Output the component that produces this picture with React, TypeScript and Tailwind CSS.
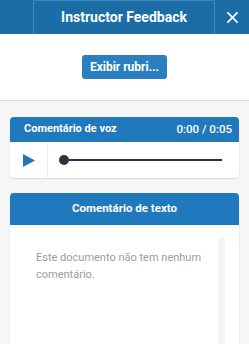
import React from 'react';

const App: React.FC = () => {
  return (
    <div className="w-[249px] h-[344px] overflow-hidden bg-[#f6f6f6] font-['Roboto',sans-serif]">
      {/* Top bar */}
      <div className="flex h-[34px] bg-[#1c6ca5]">
        <div className="w-[33px]" />
        <div className="flex w-[182px] items-center justify-center border-x border-t border-[#3c88bd] text-[14px] font-bold text-white">
          Instructor Feedback
        </div>
        <div className="flex flex-1 items-center justify-center">
          <svg width="13" height="13" viewBox="0 0 14 14" fill="none" stroke="white" strokeWidth="1.8">
            <path d="M1.5 1.5l11 11M12.5 1.5l-11 11" />
          </svg>
        </div>
      </div>

      {/* Rubric button */}
      <div className="flex h-[67px] items-center justify-center border-b border-[#dddddd] bg-white">
        <button className="h-[24px] w-[85px] rounded-[3px] bg-[#2a7fc1] text-[12px] font-bold text-white">
          Exibir rubri...
        </button>
      </div>

      <div className="flex flex-col gap-[15px] px-[10px] pt-[16px]">
        {/* Voice comment */}
        <div className="overflow-hidden rounded-[4px] bg-white shadow-[0_1px_2px_rgba(0,0,0,0.12)]">
          <div className="flex h-[25px] items-center justify-between bg-[#2079bc] pl-[14px] pr-[7px] text-[11px] font-bold text-white">
            <span>Comentário de voz</span>
            <span className="text-[11.5px] font-medium">0:00 / 0:05</span>
          </div>
          <div className="flex h-[36px]">
            <div className="flex w-[38px] items-center justify-center border-r border-[#eeeeee]">
              <svg width="12" height="13" viewBox="0 0 12 13">
                <path d="M0 0L12 6.5L0 13z" fill="#1f78bd" />
              </svg>
            </div>
            <div className="flex flex-1 items-center pl-[11px] pr-[17px]">
              <div className="h-[10px] w-[10px] shrink-0 rounded-full bg-[#2b3140]" />
              <div className="h-[2px] flex-1 bg-[#2b3140]" />
            </div>
          </div>
        </div>

        {/* Text comment */}
        <div className="h-[160px] overflow-hidden rounded-t-[4px] bg-white shadow-[0_1px_2px_rgba(0,0,0,0.12)]">
          <div className="flex h-[32px] items-center justify-center bg-[#2079bc] text-[11.5px] font-bold text-white">
            Comentário de texto
          </div>
          <div className="flex pl-[26px] pt-[12px]">
            <p className="flex-1 pt-[12px] text-[11px] leading-[17px] text-[#9c9c9c]">
              Este documento não tem nenhum comentário.
            </p>
            <div className="ml-[6px] mr-[14px] h-[140px] w-[7px] rounded-t-[4px] bg-[#f4f4f4]" />
          </div>
        </div>
      </div>
    </div>
  );
};

export default App;
